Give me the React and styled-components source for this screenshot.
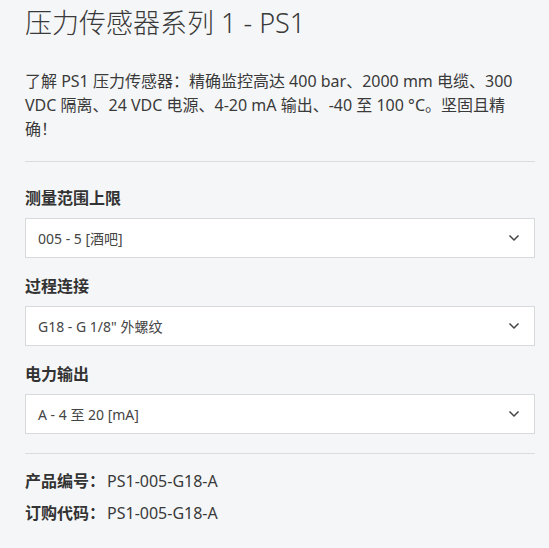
import React from "react";
import styled, { createGlobalStyle } from "styled-components";

const Global = createGlobalStyle`
  html, body { margin: 0; padding: 0; background: #f5f6f8; }
  body { font-family: "Noto Sans", "Noto Sans CJK SC", sans-serif; color: #333; }
`;

const Page = styled.div`
  padding: 0 14px 20px 25px;
  display: flex;
  flex-direction: column;
`;

const Title = styled.h1`
  margin: 0;
  font-size: 27px;
  font-weight: 300;
  line-height: 46px;
  color: #3a3a3a;
`;

const Desc = styled.p`
  margin: 23px 0 0;
  font-size: 16px;
  line-height: 24px;
  color: #3a3a3a;
`;

const Divider = styled.hr`
  border: none;
  border-top: 1px solid #dcdcde;
  margin: ${(p) => p.$mt}px 0 0;
`;

const Field = styled.div`
  display: flex;
  flex-direction: column;
  margin-top: ${(p) => p.$mt}px;
`;

const Label = styled.div`
  font-size: 16px;
  font-weight: 700;
  line-height: 24px;
  color: #333;
`;

const Select = styled.div`
  margin-top: 8px;
  height: 40px;
  box-sizing: border-box;
  border: 1px solid #d9d9dc;
  background: #fff;
  display: flex;
  align-items: center;
  justify-content: space-between;
  padding: 0 14px 0 12px;
  font-size: 14px;
  color: #444;
`;

const Chevron = () => (
  <svg width="12" height="8" viewBox="0 0 12 8" fill="none">
    <path d="M1.5 1.5 L6 6 L10.5 1.5" stroke="#444" strokeWidth="1.5" />
  </svg>
);

const Info = styled.div`
  display: flex;
  flex-direction: column;
  gap: 8px;
  margin-top: 15px;
`;

const InfoRow = styled.div`
  font-size: 16px;
  line-height: 24px;
  color: #3a3a3a;
  b { font-weight: 700; color: #333; margin-right: 2px; }
`;

export default function App() {
  return (
    <>
      <Global />
      <Page>
        <Title>压力传感器系列 1 - PS1</Title>
        <Desc>
          了解 PS1 压力传感器：精确监控高达 400 bar、2000 mm 电缆、300 VDC 隔离、24 VDC 电源、4-20 mA 输出、-40 至 100 °C。坚固且精确！
        </Desc>
        <Divider $mt={20} />
        <Field $mt={24}>
          <Label>测量范围上限</Label>
          <Select>
            <span>005 - 5 [酒吧]</span>
            <Chevron />
          </Select>
        </Field>
        <Field $mt={16}>
          <Label>过程连接</Label>
          <Select>
            <span>G18 - G 1/8" 外螺纹</span>
            <Chevron />
          </Select>
        </Field>
        <Field $mt={16}>
          <Label>电力输出</Label>
          <Select>
            <span>A - 4 至 20 [mA]</span>
            <Chevron />
          </Select>
        </Field>
        <Divider $mt={19} />
        <Info>
          <InfoRow><b>产品编号：</b>PS1-005-G18-A</InfoRow>
          <InfoRow><b>订购代码：</b>PS1-005-G18-A</InfoRow>
        </Info>
      </Page>
    </>
  );
}
